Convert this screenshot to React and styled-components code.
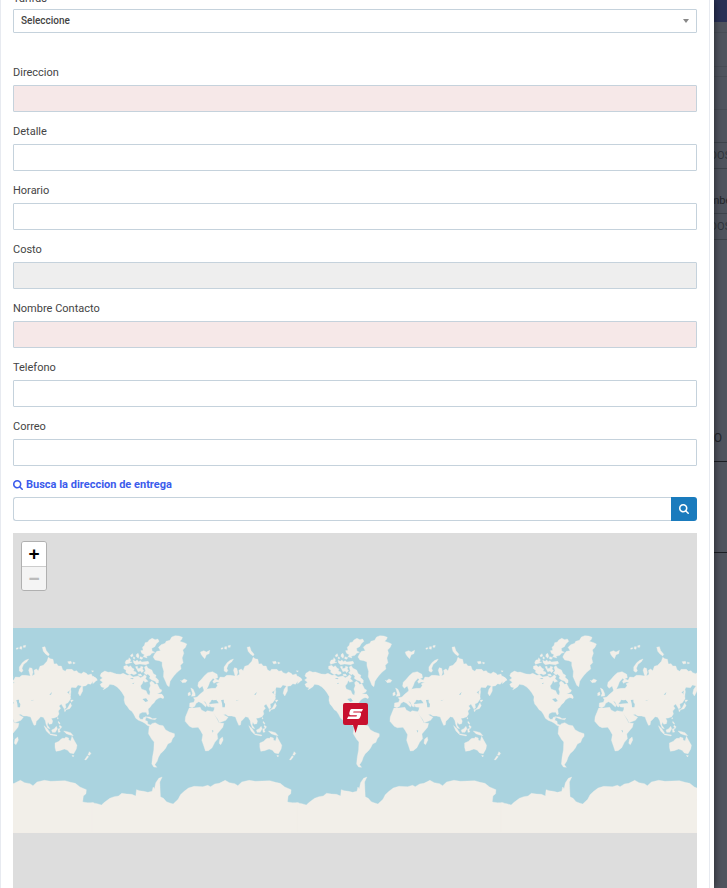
import React, { useState } from "react";
import styled, { createGlobalStyle } from "styled-components";

const FIELDS = [
  { id: "direccion", label: "Direccion", required: true },
  { id: "detalle", label: "Detalle" },
  { id: "horario", label: "Horario" },
  { id: "costo", label: "Costo", readOnly: true },
  { id: "contacto", label: "Nombre Contacto", required: true },
  { id: "telefono", label: "Telefono" },
  { id: "correo", label: "Correo" },
];

// width of one copy of the world on the map
const WORLD = 204.8;

export default function App() {
  const [values, setValues] = useState({});
  const [search, setSearch] = useState("");

  return (
    <Screen>
      <GlobalStyle />
      <Dialog>
        <Form onSubmit={(e) => e.preventDefault()}>
          <Label htmlFor="tarifas">Tarifas</Label>
          <SelectBox>
            <Select id="tarifas">
              <option>Seleccione</option>
            </Select>
            <Caret />
          </SelectBox>

          <Fields>
            {FIELDS.map(({ id, label, required, readOnly }) => (
              <div key={id}>
                <Label htmlFor={id}>{label}</Label>
                <Input
                  id={id}
                  $required={required}
                  readOnly={readOnly}
                  value={values[id] || ""}
                  onChange={(e) => setValues({ ...values, [id]: e.target.value })}
                />
              </div>
            ))}
          </Fields>

          <SearchLink href="#mapa">
            <SearchIcon />
            Busca la direccion de entrega
          </SearchLink>
          <SearchGroup>
            <SearchInput
              aria-label="Busca la direccion de entrega"
              value={search}
              onChange={(e) => setSearch(e.target.value)}
            />
            <SearchButton aria-label="Buscar">
              <SearchIcon />
            </SearchButton>
          </SearchGroup>

          <Map id="mapa">
            <WorldMap />
            <ZoomControl>
              <ZoomButton type="button" aria-label="Acercar">+</ZoomButton>
              <ZoomButton type="button" aria-label="Alejar" disabled>−</ZoomButton>
            </ZoomControl>
          </Map>
        </Form>
      </Dialog>

      <Behind>
        <TopBar />
        <Band $height={11} />
        <Band $height={34} />
        <Band $height={10} />
        <Band $height={33} />
        <Space $height={32} />
        <DimBox>DOS</DimBox>
        <DimLabel>mbe</DimLabel>
        <DimBox>DOS</DimBox>
        <Total>DO</Total>
        <Panel />
      </Behind>
    </Screen>
  );
}

function SearchIcon() {
  return (
    <svg viewBox="0 128 1664 1664" width="10" height="10" fill="currentColor" aria-hidden="true">
      <path d="M1152 832q0-185-131.5-316.5t-316.5-131.5-316.5 131.5-131.5 316.5 131.5 316.5 316.5 131.5 316.5-131.5 131.5-316.5zm512 832q0 54-38 92t-92 38q-54 0-90-38l-343-342q-179 124-399 124-143 0-273.5-55.5t-225-150-150-225-55.5-273.5 55.5-273.5 150-225 225-150 273.5-55.5 273.5 55.5 225 150 150 225 55.5 273.5q0 220-124 399l343 343q37 37 37 90z" />
    </svg>
  );
}

function WorldMap() {
  return (
    <MapSvg viewBox="0 0 1200 205" role="img" aria-label="Mapa">
      <defs>
        <g id="world" transform="scale(0.33333) translate(-9 -24)">
          <g fill="#f2efe9" stroke="#f2efe9" strokeWidth="1" strokeLinejoin="round">
            {/* America */}
            <path d="M30 180 38 174 31 168 34 160 45 153 55 157 62 156 80 162 92 163 100 160 112 166 121 165 130 171 145 168 152 173 158 170 165 164 170 170 166 178 160 184 158 190 152 198 155 207 163 210 169 212 173 222 179 226 181 216 178 207 182 197 180 188 185 183 192 188 195 193 202 191 206 199 210 207 216 210 214 216 202 222 212 222 221 228 220 236 214 232 206 235 198 240 193 248 186 254 181 262 175 267 177 282 173 285 169 277 158 277 149 281 147 291 152 298 159 298 162 292 169 292 166 301 173 304 174 312 184 316 183 319 174 317 165 310 157 305 146 301 138 295 132 283 126 274 119 269 113 260 106 252 103 241 104 230 97 218 90 209 82 201 72 195 60 193 55 200 46 206 40 209 44 203 35 201 31 193 39 187Z" />
            <path d="M178 320 186 311 196 308 208 315 220 317 227 329 239 336 254 341 254 349 248 356 244 367 234 372 228 384 221 393 212 401 206 412 202 424 195 434 201 442 192 441 186 432 188 412 192 390 193 366 186 358 176 341Z" />
            <path d="M195 101 201 94 212 92 206 82 214 74 226 70 229 64 240 61 246 51 256 47 268 48 278 52 276 58 270 64 283 68 291 72 287 82 279 90 282 100 277 114 280 128 272 136 274 147 262 157 252 168 246 176 241 184 238 200 232 196 227 184 221 170 222 154 217 137 217 126 208 122 196 120 190 111Z" />
            <path d="M156 100 153 92 160 91 158 82 164 76 166 68 174 66 178 60 187 55 196 59 204 57 208 64 200 71 195 80 186 85 187 93 195 97 186 100 181 106 170 109 172 114 160 110 164 104Z" />
            <path d="M140 103 145 100 148 108 145 115 139 109ZM151 110 160 113 156 118 150 116ZM122 106 128 101 130 108 124 111ZM132 110 136 114 133 118 130 114ZM106 127 110 120 116 119 118 113 123 120 120 125 127 127 114 131 108 133ZM130 121 137 124 142 120 146 125 152 122 156 126 175 124 178 130 168 134 150 132 138 134 132 129Z" />
            <path d="M102 146 102 139 111 136 117 141 122 137 128 145 133 147 131 153 139 156 140 161 132 164 125 161 119 164 108 157 109 151ZM137 140 143 139 144 146 152 144 153 139 160 141 158 147 162 152 156 158 152 153 145 155 142 149ZM164 141 170 137 175 145 186 150 191 161 199 166 197 172 206 180 206 188 200 190 196 184 186 180 179 175 181 169 174 162 170 165 162 158 167 153ZM160 178 168 177 175 184 165 187ZM208 226 216 222 222 234 214 234ZM145 163 153 162 156 168 147 167Z" />
            <path d="M166 290 180 291 188 296 200 295 196 299 182 297 170 292Z" />
            {/* Iceland, Svalbard and the arctic coast */}
            <path d="M272 180 275 183 283 177 292 181 288 187 278 188ZM332 96 342 92 350 96 360 91 358 101 350 104 345 116 338 109 334 103ZM394 84 400 83 399 87 394 88ZM405 80 411 80 410 88 404 86ZM415 77 422 76 421 82 415 82ZM403 153 403 141 412 128 421 121 431 117 426 125 416 133 411 145 414 152 410 157ZM472 82 480 80 484 92 493 103 490 108 481 101 475 94ZM548 125 558 124 560 130 552 132ZM564 126 571 129 565 132ZM620 152 626 153 622 156ZM9 168 22 178 16 185 9 191Z" />
            {/* Europe and Asia */}
            <path d="M300 249 312 247 315 239 311 233 322 231 331 222 341 214 344 207 343 199 348 200 349 208 365 205 377 205 383 197 380 191 390 187 380 186 372 190 369 184 374 179 370 175 360 186 356 197 351 207 342 209 338 198 329 205 324 198 326 187 335 178 344 167 354 158 368 155 382 163 384 173 376 176 386 181 391 171 403 172 411 166 422 166 436 168 431 151 434 143 441 145 444 157 441 168 449 163 447 151 454 147 460 152 465 139 475 136 486 124 490 112 496 116 504 118 507 132 515 131 520 138 529 138 533 149 541 154 545 148 561 148 567 154 575 152 580 158 589 161 596 156 604 160 609 165 619 162 622 169 632 173 637 181 624 184 617 193 609 191 603 197 593 199 593 213 585 228 580 220 583 208 590 198 579 195 573 203 560 202 553 212 546 217 556 226 557 236 549 248 541 252 543 263 538 267 533 259 529 252 522 258 527 265 520 273 522 282 517 290 507 294 499 295 503 303 501 311 493 313 489 306 487 315 495 326 488 324 483 312 481 302 475 292 467 290 459 299 454 304 452 315 447 316 441 302 437 291 426 288 415 288 407 283 401 284 415 292 408 301 389 308 384 298 376 287 369 277 373 269 374 262 363 261 358 253 372 251 387 250 382 244 374 240 366 243 358 249 359 261 353 259 347 246 341 243 350 255 348 261 336 250 327 245 319 250 315 259 307 263 299 260Z" />
            <path d="M303 204 310 208 316 221 316 228 305 229 308 220ZM295 219 301 216 302 225 295 227Z" />
            <path d="M556 204 558 215 556 228 552 220ZM557 240 565 240 559 247ZM556 249 560 257 554 266 540 270 548 264ZM538 268 543 272 539 275ZM518 292 520 296 517 297Z" />
            {/* Africa */}
            <path d="M298 264 312 264 331 262 335 270 347 276 353 272 370 275 376 287 388 309 402 310 399 322 382 342 384 356 375 367 367 383 356 392 347 393 342 378 336 361 339 344 331 330 325 322 308 323 299 319 286 304 287 291ZM398 351 400 360 393 374 388 370 390 358Z" />
            {/* Oceania */}
            <path d="M477 317 487 326 495 338 493 342 484 333ZM494 341 516 345 515 348 495 344ZM500 330 508 326 514 319 517 326 511 337 502 337ZM519 327 527 325 523 330 526 336 520 337ZM520 304 525 309 525 313 520 309ZM524 316 530 320 528 325 523 321ZM536 333 547 335 557 338 565 347 555 345 544 341Z" />
            <path d="M510 369 522 364 526 359 532 355 540 355 542 351 551 354 551 360 557 363 561 349 567 360 576 376 574 387 566 401 555 399 548 391 538 387 524 392 513 394 510 382ZM561 406 567 407 564 411ZM613 395 618 400 614 406 609 405ZM607 407 611 410 603 420 599 419Z" />
            {/* Antarctica */}
            <path d="M6 548 22 551 35 555 44 547 60 535 73 530 86 528 96 520 111 522 126 523 138 528 140 509 149 512 162 514 174 517 187 514 190 501 194 506 198 488 207 475 217 471 210 486 211 510 212 530 221 535 230 545 240 549 250 552 265 538 272 524 283 514 296 504 313 499 339 500 354 496 362 500 375 492 388 490 406 481 419 488 435 491 444 497 456 486 478 481 497 484 518 483 540 482 557 487 571 490 585 501 604 509 603 521 595 528 593 546 608 548 626 548V639H6Z" />
          </g>
          {/* inland water */}
          <path fill="#aad3df" d="M362 244 367 239 373 242 379 239 386 248 371 249ZM394 240 402 239 402 247 406 252 405 262 398 262 397 251ZM493 224 501 216 498 224ZM438 242 448 239 440 243ZM366 330 371 332 369 338ZM158 237 169 235 175 243 167 246ZM120 175 132 174 128 178ZM127 190 134 188 130 192Z" />
        </g>
      </defs>
      <rect width="1200" height="205" fill="#aad3df" />
      {[-3, -2, -1, 0, 1, 2, 3].map((n) => (
        <use key={n} href="#world" transform={`translate(${542.6 + n * WORLD} 0)`} />
      ))}
      <Pin />
    </MapSvg>
  );
}

function Pin() {
  return (
    <g transform="translate(588 75)">
      <path fill="#c8102e" d="M2 0H23Q25 0 25 2V20Q25 22 23 22H15L12.6 30 10 22H2Q0 22 0 20V2Q0 0 2 0Z" />
      <path fill="#fff" d="M8.5 6H20L18.8 8.6H10.5L10.2 9.6H17Q18.6 10 18 12L17 14.5Q16.4 16 14.5 16H4L5.2 13.5H13.5L14 12.2H7.5Q5.8 12 6.3 10L7 7.5Q7.4 6.2 8.5 6Z" />
    </g>
  );
}

const GlobalStyle = createGlobalStyle`
  * {
    box-sizing: border-box;
  }
  body {
    margin: 0;
    overflow: hidden;
    font-family: Roboto, sans-serif;
    font-size: 11px;
    color: #444;
    background: #50545e;
  }
  input, select, button {
    font-family: inherit;
    font-size: 11px;
    color: inherit;
  }
`;

const Screen = styled.div`
  display: grid;
  grid-template-columns: minmax(0, 1fr) 13px;
  height: 100vh;
  overflow: hidden;
`;

const Dialog = styled.main`
  height: 100vh;
  padding-right: 4px;
  overflow: hidden;
  background: #fff;
  box-shadow: 0 0 8px rgba(0, 0, 0, 0.6);
  z-index: 1;
`;

const Form = styled.form`
  margin-top: -8px;
  padding: 0 12px;
  border: 1px solid #e7eaf0;
  border-width: 0 1px;
`;

const Label = styled.label`
  display: block;
  margin-bottom: 5px;
  line-height: 14px;
`;

const Fields = styled.div`
  display: flex;
  flex-direction: column;
  gap: 13px;
  margin-bottom: 12px;
`;

const Input = styled.input`
  display: block;
  width: 100%;
  height: 27px;
  padding: 0 8px;
  border: 1px solid #c5d2dc;
  border-radius: 1px;
  background: ${(props) =>
    props.$required ? "#f6e8e8" : props.readOnly ? "#eee" : "#fff"};
`;

const SelectBox = styled.div`
  position: relative;
  margin: -2px 0 33px;
`;

const Select = styled.select`
  display: block;
  width: 100%;
  height: 24px;
  padding: 0 20px 2px 7px;
  border: 1px solid #c5d2dc;
  border-radius: 1px;
  background: #fff;
  font-size: 10px;
  font-weight: 500;
  appearance: none;
`;

const Caret = styled.span`
  position: absolute;
  top: 10px;
  right: 8px;
  border: 3px solid transparent;
  border-top: 4px solid #888;
  border-bottom: 0;
  pointer-events: none;
`;

const SearchLink = styled.a`
  display: flex;
  align-items: center;
  gap: 3px;
  margin-bottom: 5px;
  line-height: 14px;
  font-weight: 700;
  color: #3b5bec;
  text-decoration: none;
`;

const SearchGroup = styled.div`
  display: flex;
  margin-bottom: 12px;
`;

const SearchInput = styled.input`
  flex: 1;
  min-width: 0;
  height: 24px;
  padding: 0 8px;
  border: 1px solid #c5d2dc;
  border-right: 0;
  border-radius: 3px 0 0 3px;
`;

const SearchButton = styled.button`
  display: flex;
  align-items: center;
  justify-content: center;
  width: 26px;
  height: 24px;
  padding: 0;
  border: 0;
  border-radius: 0 3px 3px 0;
  background: #1a7bbd;
  color: #fff;
`;

const Map = styled.div`
  position: relative;
  display: flex;
  align-items: center;
  justify-content: center;
  height: 395px;
  overflow: hidden;
  background: #ddd;
`;

const MapSvg = styled.svg`
  flex: none;
  width: 1200px;
  height: 205px;
`;

const ZoomControl = styled.div`
  position: absolute;
  top: 8px;
  left: 8px;
  display: flex;
  flex-direction: column;
  border: 1px solid #b0b0b0;
  border-radius: 3px;
  overflow: hidden;
`;

const ZoomButton = styled.button`
  width: 24px;
  height: 24px;
  padding: 0;
  border: 0;
  background: #fff;
  font-family: "Liberation Sans", sans-serif;
  font-size: 19px;
  font-weight: 700;
  line-height: 24px;
  color: #000;
  & + & {
    border-top: 1px solid #ccc;
  }
  &:disabled {
    background: #f4f4f4;
    color: #bbb;
  }
`;

const Behind = styled.div`
  display: flex;
  flex-direction: column;
  overflow: hidden;
  white-space: nowrap;
  color: #24262b;
`;

const TopBar = styled.div`
  flex: none;
  height: 22px;
  background: #2a3156;
`;

const Band = styled.div`
  flex: none;
  height: ${(props) => props.$height}px;
  border-bottom: 1px solid #494d56;
`;

const Space = styled.div`
  flex: none;
  height: ${(props) => props.$height}px;
`;

const DimBox = styled.div`
  flex: none;
  display: flex;
  align-items: center;
  justify-content: center;
  height: 27px;
  border: 1px solid #3f444c;
  border-width: 1px 0;
  color: #30343b;
`;

const DimLabel = styled.div`
  flex: none;
  display: flex;
  justify-content: center;
  padding: 25px 0 5px;
  line-height: 14px;
`;

const Total = styled.div`
  flex: none;
  display: flex;
  justify-content: flex-end;
  height: 222px;
  padding: 190px 5px 0 0;
  border-bottom: 1px solid #1d1f24;
  font-size: 12px;
  line-height: 16px;
`;

const Panel = styled.div`
  flex: none;
  height: 91px;
  border-bottom: 1px solid #1d1f24;
`;
